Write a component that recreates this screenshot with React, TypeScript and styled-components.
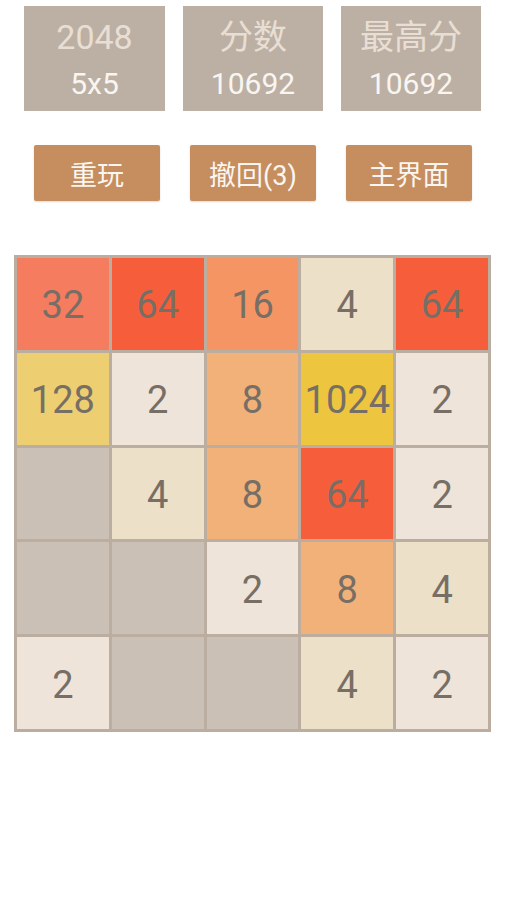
import React from "react";
import styled, { createGlobalStyle } from "styled-components";

const Global = createGlobalStyle`
  html, body { margin: 0; padding: 0; background: #ffffff; }
  body { font-family: Roboto, "Noto Sans CJK SC", "Noto Sans", sans-serif; }
`;

const Page = styled.div`
  width: 506px;
  display: flex;
  flex-direction: column;
`;

const ScoreRow = styled.div`
  display: flex;
  gap: 18px;
  padding: 6px 0 0 24px;
`;

const ScoreBox = styled.div<{ $w: number }>`
  width: ${(p) => p.$w}px;
  height: 105px;
  background: #bcb0a4;
  display: flex;
  flex-direction: column;
  align-items: center;
  box-sizing: border-box;
  padding-top: 12px;
`;

const ScoreTitle = styled.div`
  font-size: 34px;
  line-height: 38px;
  color: #eee4da;
  opacity: 0.9;
`;

const ScoreValue = styled.div`
  font-size: 30px;
  line-height: 34px;
  margin-top: 11px;
  color: #f9f6f2;
`;

const ButtonRow = styled.div`
  display: flex;
  gap: 30px;
  padding: 34px 0 0 34px;
`;

const ActionButton = styled.div`
  width: 126px;
  height: 56px;
  background: #c68d5e;
  border-radius: 2px;
  color: #f9f6f2;
  font-size: 27px;
  display: flex;
  align-items: center;
  justify-content: center;
  box-shadow: 0 1px 2px rgba(0, 0, 0, 0.15);
`;

const Board = styled.div`
  margin: 54px 0 0 14px;
  width: 477px;
  height: 477px;
  box-sizing: border-box;
  padding: 3px;
  background: #bbada0;
  display: grid;
  grid-template-columns: repeat(5, 1fr);
  grid-template-rows: repeat(5, 1fr);
  gap: 3px;
`;

const tileColors: Record<number, string> = {
  0: "#cac0b5",
  2: "#eee4da",
  4: "#ede0c8",
  8: "#f2b179",
  16: "#f59563",
  32: "#f67c5f",
  64: "#f65e3b",
  128: "#edcf72",
  1024: "#edc53f",
};

const Tile = styled.div<{ $v: number }>`
  background: ${(p) => tileColors[p.$v] ?? "#cac0b5"};
  color: #776e65;
  font-size: 38px;
  padding-top: 3px;
  box-sizing: border-box;
  display: flex;
  align-items: center;
  justify-content: center;
`;

const board = [
  [32, 64, 16, 4, 64],
  [128, 2, 8, 1024, 2],
  [0, 4, 8, 64, 2],
  [0, 0, 2, 8, 4],
  [2, 0, 0, 4, 2],
];

export default function App() {
  return (
    <Page>
      <Global />
      <ScoreRow>
        <ScoreBox $w={141}>
          <ScoreTitle>2048</ScoreTitle>
          <ScoreValue>5x5</ScoreValue>
        </ScoreBox>
        <ScoreBox $w={140}>
          <ScoreTitle>分数</ScoreTitle>
          <ScoreValue>10692</ScoreValue>
        </ScoreBox>
        <ScoreBox $w={140}>
          <ScoreTitle>最高分</ScoreTitle>
          <ScoreValue>10692</ScoreValue>
        </ScoreBox>
      </ScoreRow>
      <ButtonRow>
        <ActionButton>重玩</ActionButton>
        <ActionButton>撤回(3)</ActionButton>
        <ActionButton>主界面</ActionButton>
      </ButtonRow>
      <Board>
        {board.flat().map((v, i) => (
          <Tile key={i} $v={v}>
            {v ? v : ""}
          </Tile>
        ))}
      </Board>
    </Page>
  );
}
